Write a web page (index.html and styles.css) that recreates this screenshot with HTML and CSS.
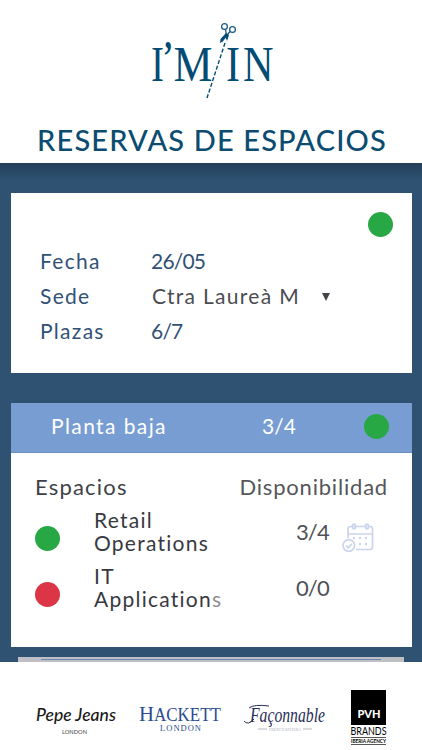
FILE: index.html
```html
<!DOCTYPE html>
<html lang="es">

<head>
    <meta charset="UTF-8">
    <meta name="viewport" content="width=device-width, initial-scale=1.0">
    <title>Reservas de espacios</title>

    <link rel="stylesheet" href="styles.css">
</head>

<body>
    <div class="app">
        <header>
            <svg class="logo" width="124" height="80" viewBox="0 0 124 80">
                <g class="logo-text">
                    <text x="1" y="60.500" textLength="13" lengthAdjust="spacingAndGlyphs">I</text>
                    <text class="quote" x="13" y="50" textLength="10" lengthAdjust="spacingAndGlyphs">’</text>
                    <text x="23.500" y="60.500" textLength="39" lengthAdjust="spacingAndGlyphs">M</text>
                    <text x="76" y="60.500" textLength="14" lengthAdjust="spacingAndGlyphs">I</text>
                    <text x="93" y="60.500" textLength="30.500" lengthAdjust="spacingAndGlyphs">N</text>
                </g>
                <path class="cut" d="M75 23 L57 78" />
                <g class="scissors">
                    <circle cx="74.500" cy="6.500" r="2.900" />
                    <circle cx="82.500" cy="9.500" r="2.900" />
                    <path d="M75.500 9.500 L77 19 M80 11.500 L71.500 22" />
                    <path class="blade" d="M76 13 L79 15 L77 21 L75.500 17 L70 23.500 L70.500 19 Z" />
                </g>
            </svg>
            <h1>RESERVAS DE ESPACIOS</h1>
        </header>

        <main>
            <section class="card summary">
                <span class="dot green"></span>
                <dl>
                    <dt>Fecha</dt>
                    <dd class="number">26/05</dd>
                    <dt>Sede</dt>
                    <dd class="select"><span>Ctra Laureà M</span><i class="arrow"></i></dd>
                    <dt>Plazas</dt>
                    <dd class="number">6/7</dd>
                </dl>
            </section>

            <section class="card floor">
                <div class="floor-head">
                    <h2>Planta baja</h2>
                    <span class="total">3/4</span>
                    <span class="dot green"></span>
                </div>
                <div class="floor-titles">
                    <h3>Espacios</h3>
                    <h3 class="availability">Disponibilidad</h3>
                </div>
                <div class="space">
                    <span class="dot green"></span>
                    <p>Retail<br>Operations</p>
                    <span class="count">3/4</span>
                    <svg class="calendar" width="32" height="30" viewBox="0 0 32 30">
                        <path d="M6 15 V6 Q6 3.500 8.500 3.500 H28 Q30.500 3.500 30.500 6 V24 Q30.500 26.500 28 26.500 H14 M6 11 H30.500" />
                        <rect x="10.500" y="1" width="3" height="5" rx="1.500" />
                        <rect x="23.500" y="1" width="3" height="5" rx="1.500" />
                        <circle cx="6.800" cy="22.500" r="5.800" />
                        <path d="M4 22.500 L6.200 24.700 L10 20.800" />
                        <path class="days" d="M12 15 h.01 M18 15 h.01 M24 15 h.01 M18 21 h.01 M24 21 h.01" />
                    </svg>
                </div>
                <div class="space">
                    <span class="dot red"></span>
                    <p>IT<br>Application<span class="fade">s</span></p>
                    <span class="count">0/0</span>
                </div>
            </section>

            <section class="next-card"></section>
        </main>

        <footer>
            <svg width="422" height="88" viewBox="0 0 422 88">
                <!-- Pepe Jeans -->
                <g class="pepe">
                    <text class="script" x="36" y="59" textLength="80" lengthAdjust="spacingAndGlyphs">Pepe Jeans</text>
                    <text class="city" x="62" y="72" textLength="25" lengthAdjust="spacingAndGlyphs">LONDON</text>
                </g>
                <!-- Hackett -->
                <g class="hackett">
                    <text x="139" y="59" textLength="82" lengthAdjust="spacingAndGlyphs"><tspan class="initial">H</tspan>ACKETT</text>
                    <text class="city" x="160" y="69" textLength="41">LONDON</text>
                </g>
                <!-- Faconnable -->
                <g class="faconnable">
                    <text class="name" x="250" y="60" textLength="75" lengthAdjust="spacingAndGlyphs">Façonnable</text>
                    <path d="M249 46 Q254 42 269 44 M244 59 Q248 64 254 57" />
                    <path class="rule" d="M258 67 H267 M303 67 H312" />
                    <text class="city" x="269" y="69" textLength="32">FRENCH RIVIERA</text>
                </g>
                <!-- PVH -->
                <g class="pvh">
                    <rect x="351" y="28" width="35" height="35" />
                    <text class="name" x="357.500" y="56" textLength="23" lengthAdjust="spacingAndGlyphs">PVH</text>
                    <text class="brands" x="350.500" y="73" textLength="36" lengthAdjust="spacingAndGlyphs">BRANDS</text>
                    <path d="M351 75.500 H386 M351 82.500 H386" />
                    <text class="agency" x="351" y="81" textLength="35" lengthAdjust="spacingAndGlyphs">IBERIA AGENCY</text>
                </g>
            </svg>
        </footer>
    </div>
</body>

</html>
```
FILE: styles.css
```css
* {
    box-sizing: border-box;
    margin: 0;
    padding: 0;
}

body {
    font-family: Lato, "Open Sans", sans-serif;
    background: #2f5273;
}

.app {
    display: flex;
    flex-direction: column;
    width: 422px;
    height: 750px;
    overflow: hidden;
}

header {
    display: flex;
    flex-direction: column;
    align-items: center;
    height: 163px;
    padding-top: 20px;
    background: white;
}

.logo {
    flex: none;
    margin-left: 2px;
    overflow: visible;
}

.logo-text {
    font-family: "Liberation Serif", serif;
    font-size: 50px;
    fill: #034c74;
}

.logo-text .quote {
    font-size: 42px;
    font-weight: bold;
}

.cut {
    fill: none;
    stroke: #034c74;
    stroke-width: 1.4;
    stroke-dasharray: 4 2;
}

.scissors {
    fill: none;
    stroke: #1a5b80;
    stroke-width: 1.3;
}

.scissors .blade {
    fill: #034c74;
    stroke: none;
}

h1 {
    margin-top: 22px;
    padding-left: 2px;
    font-size: 29px;
    line-height: 36px;
    font-weight: 500;
    letter-spacing: 1.15px;
    white-space: nowrap;
    color: #0b4c70;
}

main {
    flex: 1;
    min-height: 0;
    padding: 30px 10px 0 11px;
    background: linear-gradient(#233f5a, #2f5273 17px);
}

.card {
    background: white;
}

.dot {
    width: 25px;
    height: 25px;
    border-radius: 50%;
}

.green {
    background: #28a745;
}

.red {
    background: #dc3545;
}

.summary {
    display: flex;
    flex-direction: column;
    height: 180px;
    padding: 19px 19px 0 29px;
}

.summary .dot {
    align-self: flex-end;
}

dl {
    display: grid;
    grid-template-columns: 111px 1fr;
    grid-auto-rows: 35px;
    margin-top: 6px;
    font-size: 21px;
    line-height: 35px;
    letter-spacing: 1.3px;
    color: #315177;
}

.number {
    letter-spacing: -0.8px;
}

.select {
    display: flex;
    align-items: center;
    gap: 22px;
    padding-left: 1px;
    color: #4b4c52;
}

.arrow {
    margin-top: 2px;
    border-left: 4px solid transparent;
    border-right: 4px solid transparent;
    border-top: 8px solid #43444a;
}

.floor {
    height: 244px;
    margin-top: 30px;
}

.floor-head {
    display: grid;
    grid-template-columns: 211px 102px 25px;
    align-items: center;
    height: 50px;
    padding-left: 40px;
    padding-bottom: 2px;
    color: white;
    background: #779dd2;
    border-bottom: 1px solid #6d8fbe;
}

h2 {
    margin-top: -2px;
    font-size: 21px;
    font-weight: normal;
    letter-spacing: 1.4px;
}

.total {
    margin-top: -2px;
    font-size: 21px;
}

.floor-titles {
    display: flex;
    justify-content: space-between;
    height: 56px;
    padding: 20px 24px 0 24px;
    line-height: 28px;
    color: #404148;
}

h3 {
    font-size: 22px;
    font-weight: normal;
    letter-spacing: 1.2px;
}

.floor-titles .availability {
    letter-spacing: 0.8px;
    color: #55565b;
}

.space {
    display: grid;
    grid-template-columns: 59px 202px 46px 32px;
    height: 56px;
    padding-left: 24px;
    font-size: 21px;
    line-height: 23px;
    letter-spacing: 1.25px;
    color: #38393f;
}

.space p {
    margin-top: -1px;
}

.space .dot {
    margin-top: 17px;
}

.count {
    margin-top: 11px;
    font-size: 22px;
    letter-spacing: -0.9px;
    color: #505156;
}

.fade {
    color: #8d8e93;
}

.calendar {
    margin-top: 14px;
    fill: none;
    stroke: #cad5ed;
    stroke-width: 1.7;
}

.calendar rect {
    fill: #e4eaf7;
}

.days {
    stroke-width: 2.4;
    stroke-linecap: round;
}

.next-card {
    height: 5px;
    margin: 10px 8px 0 7px;
    padding: 2px 23px;
    background: #bfc0c5;
}

.next-card::before {
    content: "";
    display: block;
    height: 1px;
    background: #6f86b0;
}

footer {
    height: 88px;
    background: white;
}

.pepe .script {
    font-size: 18px;
    font-style: italic;
    font-weight: 500;
    fill: #191919;
}

.pepe .city {
    font-size: 5px;
    fill: #444;
}

.hackett {
    font-family: "Liberation Serif", serif;
    font-size: 18px;
    fill: #2b4b8f;
}

.hackett .initial {
    font-size: 22px;
}

.hackett .city {
    font-size: 8.5px;
}

.faconnable {
    font-family: "Liberation Serif", serif;
    font-style: italic;
    fill: #272e57;
}

.faconnable .name {
    font-size: 20px;
}

.faconnable path {
    fill: none;
    stroke: #272e57;
}

.faconnable .rule {
    stroke: #b3b6c2;
}

.faconnable .city {
    font-size: 3.5px;
    font-style: normal;
    fill: #a5a8b5;
}

.pvh .name {
    font-size: 11px;
    font-weight: 900;
    fill: white;
}

.pvh .brands {
    font-size: 11px;
}

.pvh .agency {
    font-size: 5.5px;
    font-weight: bold;
}

.pvh path {
    stroke: #555;
}
```
